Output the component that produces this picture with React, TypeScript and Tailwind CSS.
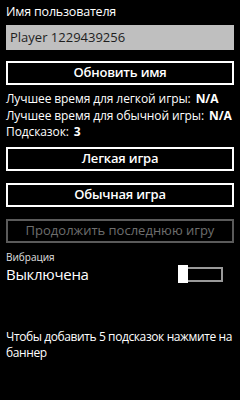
import React from "react";

const font = { fontFamily: '"Open Sans", "Noto Sans", sans-serif' };

function Btn({ children, disabled }: { children: React.ReactNode; disabled?: boolean }) {
  return (
    <div
      className={
        "h-[24px] flex items-center justify-center border-2 text-[13px] " +
        (disabled ? "border-[#5a5a5a] text-[#6e6e6e]" : "border-white text-white font-semibold tracking-[-0.2px]")
      }
    >
      {children}
    </div>
  );
}

export default function App() {
  return (
    <div className="w-[240px] h-[400px] bg-black text-white px-[6px] overflow-hidden" style={font}>
      <div className="pt-[3px] text-[12.5px] leading-[18px] tracking-[-0.2px]">Имя пользователя</div>
      <div className="mt-[4px] h-[25px] bg-[#bfbfbf] text-[#1e1e1e] text-[13px] flex items-center pl-[4px]">
        Player 1229439256
      </div>
      <div className="mt-[11px]">
        <Btn>Обновить имя</Btn>
      </div>
      <div className="mt-[6px] text-[12px] leading-[16.5px] whitespace-nowrap tracking-[-0.1px]">
        <div>
          Лучшее время для легкой игры:<b className="font-bold ml-[5px]">N/A</b>
        </div>
        <div>
          Лучшее время для обычной игры:<b className="font-bold ml-[5px]">N/A</b>
        </div>
        <div>
          Подсказок:<b className="font-bold ml-[5px]">3</b>
        </div>
      </div>
      <div className="mt-[6px] flex flex-col gap-[12px]">
        <Btn>Легкая игра</Btn>
        <Btn>Обычная игра</Btn>
        <Btn disabled>Продолжить последнюю игру</Btn>
      </div>
      <div className="mt-[8px] text-[10px] leading-[12px] text-[#e0e0e0]">Вибрация</div>
      <div className="mt-[1px] flex items-center justify-between h-[21px]">
        <div className="text-[15px] leading-[20px] tracking-[-0.3px]">Выключена</div>
        <div className="flex items-center mr-[11px]">
          <div className="w-[10px] h-[18px] bg-white" />
          <div className="w-[35px] h-[15px] border-2 border-[#9a9a9a] border-l-0" />
        </div>
      </div>
      <div className="mt-[44px] text-[12px] leading-[16px] tracking-[-0.4px]">
        Чтобы добавить 5 подсказок нажмите на баннер
      </div>
    </div>
  );
}
